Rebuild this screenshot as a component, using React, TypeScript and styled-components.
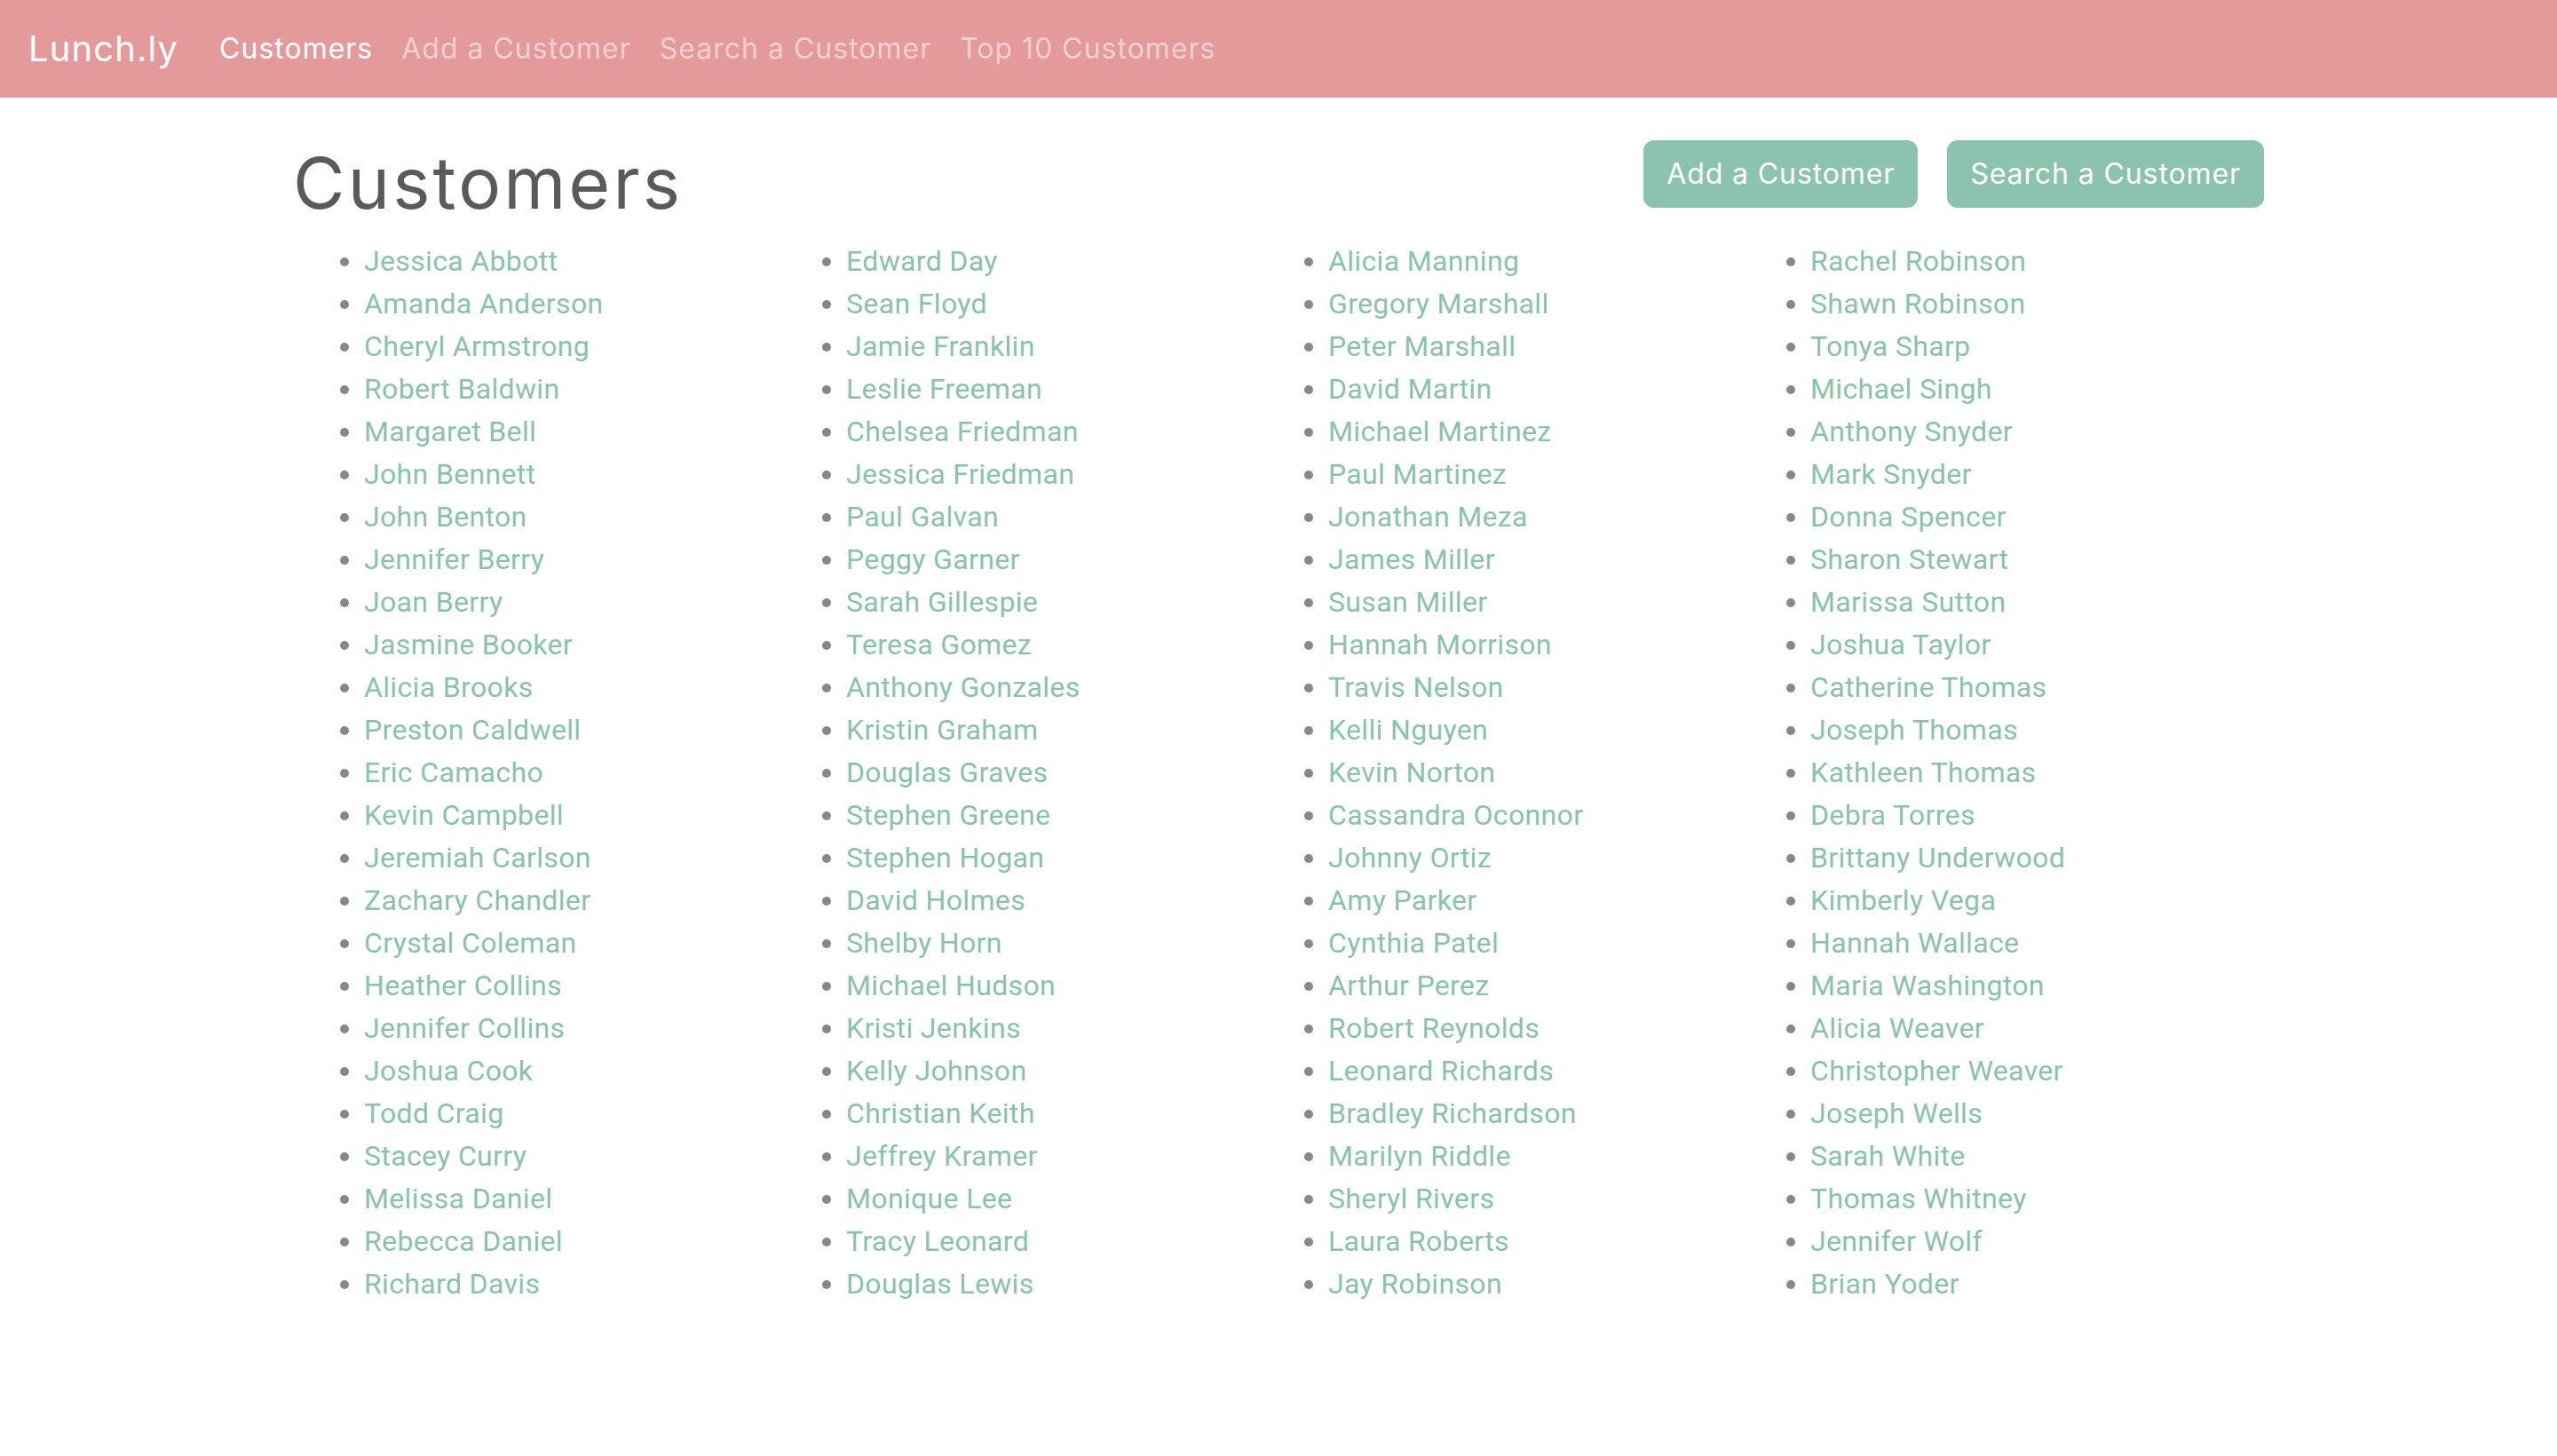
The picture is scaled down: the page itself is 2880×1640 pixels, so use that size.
import React from "react";
import styled, { createGlobalStyle } from "styled-components";

const GlobalStyle = createGlobalStyle`
  html, body { margin: 0; padding: 0; background: #ffffff; }
  body { font-family: Inter, "DejaVu Sans", sans-serif; color: #888888; }
`;

const Navbar = styled.nav`
  height: 110px;
  background: #e4999b;
  display: flex;
  align-items: center;
  padding: 0 32px;
  box-sizing: border-box;
`;

const Brand = styled.a`
  font-family: Inter, "DejaVu Sans", sans-serif;
  font-size: 40px;
  letter-spacing: 1.1px;
  color: #ffffff;
  text-decoration: none;
  margin-right: 30px;
  line-height: 60px;
`;

const NavLinks = styled.div`
  display: flex;
  align-items: center;
`;

const NavLink = styled.a<{ $active?: boolean }>`
  font-family: Inter, "DejaVu Sans", sans-serif;
  font-size: 32px;
  letter-spacing: 1px;
  line-height: 48px;
  padding: 0 16px;
  color: ${(p) => (p.$active ? "#ffffff" : "rgba(255,255,255,0.55)")};
  text-decoration: none;
`;

const Container = styled.main`
  width: 2220px;
  margin: 48px auto 0;
`;

const HeaderRow = styled.div`
  display: flex;
  justify-content: space-between;
  align-items: flex-start;
`;

const Title = styled.h1`
  margin: 0 0 16px;
  font-family: Inter, "DejaVu Sans", sans-serif;
  font-weight: 400;
  font-size: 80px;
  line-height: 96px;
  letter-spacing: 3.2px;
  color: #5a5a5a;
`;

const ButtonGroup = styled.div`
  display: flex;
  gap: 33px;
`;

const Button = styled.a`
  display: inline-block;
  font-family: Inter, "DejaVu Sans", sans-serif;
  font-size: 32px;
  letter-spacing: 0.9px;
  line-height: 48px;
  padding: 12px 24px;
  border: 2px solid #8bc3ae;
  border-radius: 12px;
  background: #8bc3ae;
  color: #ffffff;
  text-decoration: none;
`;

const CustomerList = styled.ul`
  margin: 0 0 32px;
  padding-left: 80px;
  columns: 4;
  column-gap: 32px;
  font-family: Roboto, "Liberation Sans", sans-serif;
  font-size: 32px;
  line-height: 48px;
  color: #888888;
`;

const CustomerItem = styled.li``;

const CustomerLink = styled.a`
  color: #8ac2ad;
  letter-spacing: 0.35px;
  text-decoration: none;
`;

const customers = [
  "Jessica Abbott", "Amanda Anderson", "Cheryl Armstrong", "Robert Baldwin", "Margaret Bell",
  "John Bennett", "John Benton", "Jennifer Berry", "Joan Berry", "Jasmine Booker",
  "Alicia Brooks", "Preston Caldwell", "Eric Camacho", "Kevin Campbell", "Jeremiah Carlson",
  "Zachary Chandler", "Crystal Coleman", "Heather Collins", "Jennifer Collins", "Joshua Cook",
  "Todd Craig", "Stacey Curry", "Melissa Daniel", "Rebecca Daniel", "Richard Davis",
  "Edward Day", "Sean Floyd", "Jamie Franklin", "Leslie Freeman", "Chelsea Friedman",
  "Jessica Friedman", "Paul Galvan", "Peggy Garner", "Sarah Gillespie", "Teresa Gomez",
  "Anthony Gonzales", "Kristin Graham", "Douglas Graves", "Stephen Greene", "Stephen Hogan",
  "David Holmes", "Shelby Horn", "Michael Hudson", "Kristi Jenkins", "Kelly Johnson",
  "Christian Keith", "Jeffrey Kramer", "Monique Lee", "Tracy Leonard", "Douglas Lewis",
  "Alicia Manning", "Gregory Marshall", "Peter Marshall", "David Martin", "Michael Martinez",
  "Paul Martinez", "Jonathan Meza", "James Miller", "Susan Miller", "Hannah Morrison",
  "Travis Nelson", "Kelli Nguyen", "Kevin Norton", "Cassandra Oconnor", "Johnny Ortiz",
  "Amy Parker", "Cynthia Patel", "Arthur Perez", "Robert Reynolds", "Leonard Richards",
  "Bradley Richardson", "Marilyn Riddle", "Sheryl Rivers", "Laura Roberts", "Jay Robinson",
  "Rachel Robinson", "Shawn Robinson", "Tonya Sharp", "Michael Singh", "Anthony Snyder",
  "Mark Snyder", "Donna Spencer", "Sharon Stewart", "Marissa Sutton", "Joshua Taylor",
  "Catherine Thomas", "Joseph Thomas", "Kathleen Thomas", "Debra Torres", "Brittany Underwood",
  "Kimberly Vega", "Hannah Wallace", "Maria Washington", "Alicia Weaver", "Christopher Weaver",
  "Joseph Wells", "Sarah White", "Thomas Whitney", "Jennifer Wolf", "Brian Yoder",
];

export default function App() {
  return (
    <>
      <GlobalStyle />
      <Navbar>
        <Brand href="#">Lunch.ly</Brand>
        <NavLinks>
          <NavLink $active href="#">Customers</NavLink>
          <NavLink href="#">Add a Customer</NavLink>
          <NavLink href="#">Search a Customer</NavLink>
          <NavLink href="#">Top 10 Customers</NavLink>
        </NavLinks>
      </Navbar>
      <Container>
        <HeaderRow>
          <Title>Customers</Title>
          <ButtonGroup>
            <Button href="#">Add a Customer</Button>
            <Button href="#">Search a Customer</Button>
          </ButtonGroup>
        </HeaderRow>
        <CustomerList>
          {customers.map((name) => (
            <CustomerItem key={name}>
              <CustomerLink href="#">{name}</CustomerLink>
            </CustomerItem>
          ))}
        </CustomerList>
      </Container>
    </>
  );
}
